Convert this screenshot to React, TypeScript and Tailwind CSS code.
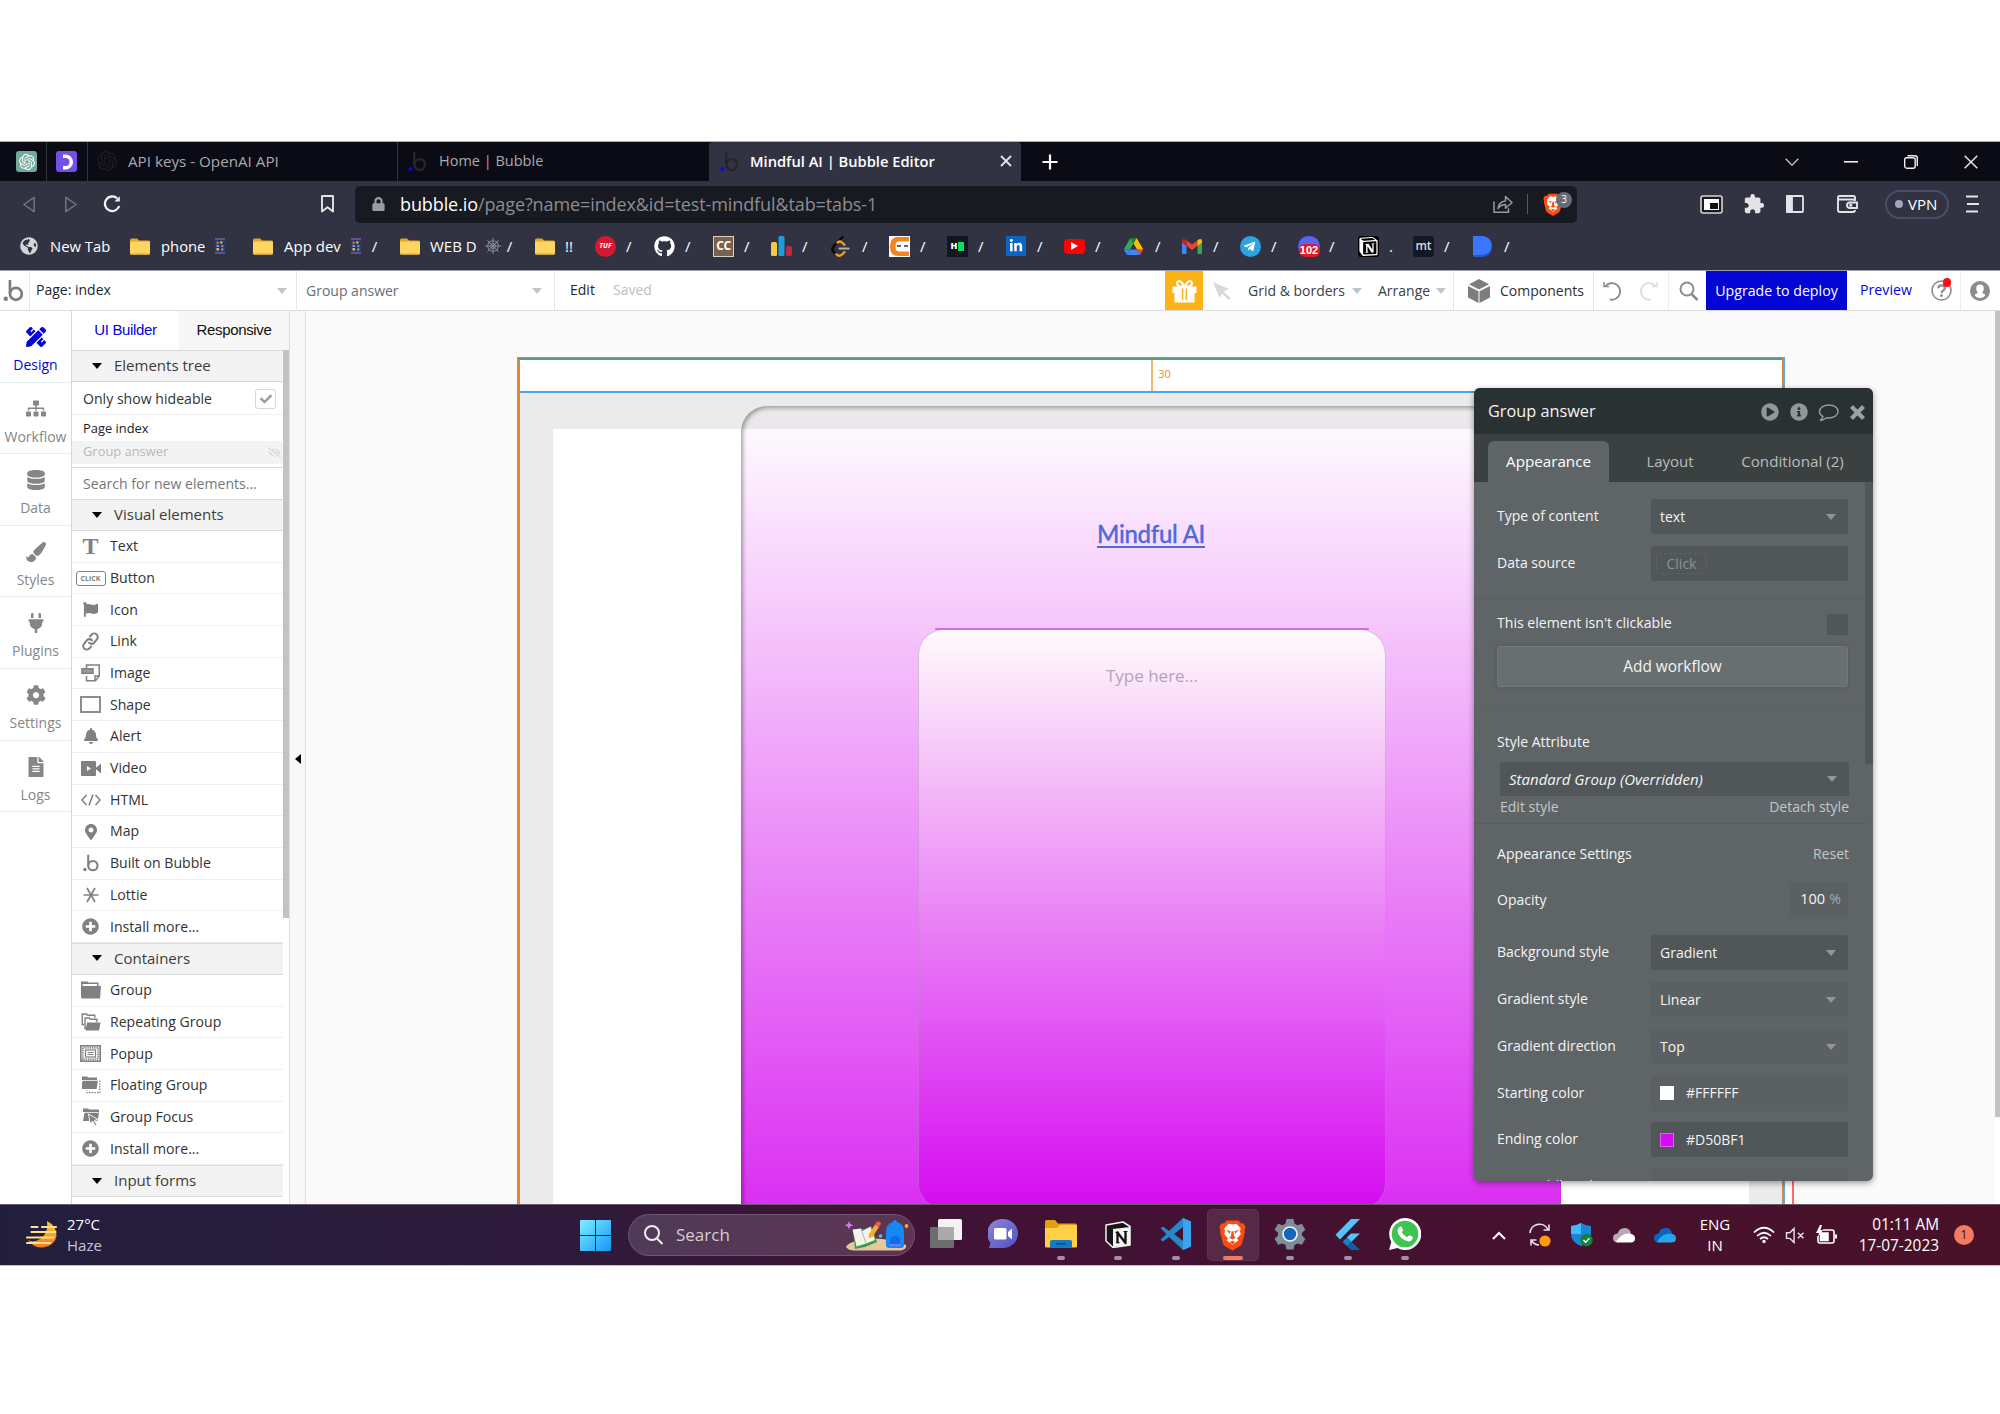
import React from "react";
import {
  FaSitemap, FaDatabase, FaPaintBrush, FaPlug, FaCog, FaFileAlt, FaPencilRuler, FaFlag, FaBell,
  FaMapMarkerAlt, FaPlusCircle, FaPlayCircle, FaInfoCircle,
  FaGithub, FaLock, FaCheck, FaEyeSlash, FaLinkedinIn, FaTelegramPlane, FaGlobeAmericas,
} from "react-icons/fa";
import { MdExtension } from "react-icons/md";
import { SiOpenai, SiNotion } from "react-icons/si";

/* ---------- shared pieces ---------- */

const Caret = ({ className = "" }: { className?: string }) => (
  <svg viewBox="0 0 10 6" className={`h-[6px] w-[10px] shrink-0 ${className}`} fill="currentColor">
    <path d="M0 0h10L5 6z" />
  </svg>
);

const BubbleLogo = ({ className, dot = "currentColor" }: { className: string; dot?: string }) => (
  <svg viewBox="0 0 21 24" className={className} fill="none">
    <circle cx="2.4" cy="20.6" r="2.3" fill={dot} />
    <path d="M6.800 1v14.500" stroke="currentColor" strokeWidth="2.800" />
    <circle cx="13" cy="15.500" r="6.200" stroke="currentColor" strokeWidth="2.800" />
  </svg>
);

const Folder = ({ className }: { className: string }) => (
  <svg viewBox="0 0 20 17" className={className}>
    <path d="M0 2.200Q0 .5 1.500.5H7l2.200 2H18.600Q20 2.500 20 4v2H0z" fill="#e6a526" />
    <rect x="0" y="3.500" width="20" height="13" rx="1.200" fill="#ffd561" />
    <path d="M0 15h20v.6q0 1-1.200 1H1.200q-1.200 0-1.200-1z" fill="#f4bf3d" />
  </svg>
);

const Phone = () => (
  <svg viewBox="0 0 12 16" className="h-4 w-3">
    <path d="M1 0h10v2.500H1zM1 13.500h10V16H1z" fill="#6a4f86" />
    <rect x="1" y="2" width="10" height="12" fill="#233a6b" />
    <path d="M2.500 3.500h2.200v2.500H2.500zM7 7h2.500v2.200H7z" fill="#e35d4f" />
    <path d="M6 3.500h2.500v2H6zM2.500 10h2.500v2.500H2.500z" fill="#f4b942" />
    <path d="M2.500 7h2.500v2H2.500zM7 10.500h2.500v2H7z" fill="#59a7f0" />
  </svg>
);

const Brave = ({ className }: { className: string }) => (
  <svg viewBox="0 0 28 32" className={className}>
    <path d="M8 1h12l3 3.200 2.500-.4L27.500 8l-1 3 .4 2-3 11.500q-.6 2-2.300 3.200L14 32l-7.600-4.300q-1.700-1.200-2.300-3.200L1.100 13l.4-2-1-3 2-4.200 2.500.4z" fill="#ff4a12" />
    <path d="M14 5l4-.6 4.500 4.600-.8 3.500 1 2.500-4.200 4.500 1.800 2L14 26l-6.300-4.500 1.800-2L5.300 15l1-2.500-.8-3.500L10 4.400z" fill="#fff" />
    <path d="M7.500 10.500l4.500 1.700-1 2.500zM20.500 10.500L16 12.200l1 2.500zM13 12h2l.6 5.500 2 1.200L14 20.600l-3.600-1.900 2-1.200zM14 22l3 1.600-3 2-3-2z" fill="#ff4a12" />
  </svg>
);

/* ---------- browser chrome ---------- */

const TabStrip = () => (
  <div className="flex h-[39px] shrink-0 items-center bg-[#0b0b15] text-[15px] text-[#a9a9ae]">
    <div className="flex h-full w-[47px] items-center border-r border-[#34343e] pl-4">
      <span className="flex h-[21px] w-[21px] items-center justify-center rounded-[3px] bg-[#74aa9c]">
        <SiOpenai className="h-4 w-4 text-white" />
      </span>
    </div>
    <div className="flex h-full w-[41px] items-center border-r border-[#34343e] pl-[9px]">
      <span className="flex h-[21px] w-[21px] items-center justify-center rounded-[3px] bg-[#7350e8]">
        <svg viewBox="0 0 14 16" className="h-4 w-[14px]" fill="none" stroke="#fff" strokeWidth="3.500"><path d="M3 2.200h2.500a5.800 5.800 0 010 11.600H3" /></svg>
      </span>
    </div>
    <div className="flex h-full w-[310px] items-center border-r border-[#34343e] pb-px pl-[9px]">
      <SiOpenai className="h-5 w-5 text-[#1c1c21]" />
      <span className="ml-[11px] text-[15.200px]">API keys - OpenAI API</span>
    </div>
    <div className="flex h-full w-[311px] items-center pb-px pl-[9px]">
      <BubbleLogo className="h-[21px] w-[21px] text-[#26262a]" dot="#0505ff" />
      <span className="ml-[11px] text-[14.500px]">Home | Bubble</span>
    </div>
    <div className="flex h-full w-[312px] items-center rounded-t-[4px] bg-[#313342] pb-px pl-[10px] text-white">
      <BubbleLogo className="h-[21px] w-[21px] text-[#262626]" dot="#0505ff" />
      <span className="ml-[10px] w-[250px] text-[14.700px] font-semibold">Mindful AI | Bubble Editor</span>
      <svg viewBox="0 0 12 12" className="h-3 w-3" stroke="#e4e4e8" strokeWidth="1.800"><path d="M1 1l10 10M11 1L1 11" /></svg>
    </div>
    <svg viewBox="0 0 16 16" className="ml-[21px] h-4 w-4" stroke="#fff" strokeWidth="2.200"><path d="M8 .5v15M.5 8h15" /></svg>
    <div className="ml-auto flex items-center pr-[22px] text-white">
      <svg viewBox="0 0 14 8" className="mr-[45px] h-2 w-[14px]" fill="none" stroke="#bbb" strokeWidth="1.400"><path d="M.7.700L7 7.200 13.300.7" /></svg>
      <svg viewBox="0 0 14 2" className="mr-[46px] h-[2px] w-[14px]" fill="#eee"><path d="M0 0h14v1.600H0z" /></svg>
      <svg viewBox="0 0 14 14" className="mr-[46px] h-[14px] w-[14px]" fill="none" stroke="#eee" strokeWidth="1.400"><rect x=".7" y="2.700" width="10.500" height="10.500" rx="2" /><path d="M3.500.8H11q2.300 0 2.300 2.300V11" /></svg>
      <svg viewBox="0 0 14 14" className="h-[14px] w-[14px]" stroke="#eee" strokeWidth="1.400"><path d="M.7.700l12.600 12.600M13.300.700L.7 13.300" /></svg>
    </div>
  </div>
);

const NavRow = () => (
  <div className="flex h-[47px] shrink-0 items-center bg-[#313342] pb-px pl-[22px]">
    <svg viewBox="0 0 14 18" className="mr-[28px] h-[17px] w-[14px]" fill="none" stroke="#73747f" strokeWidth="1.600" strokeLinejoin="round"><path d="M12.500 1.500v15L1.500 9z" /></svg>
    <svg viewBox="0 0 14 18" className="mr-[25px] h-[17px] w-[14px]" fill="none" stroke="#73747f" strokeWidth="1.600" strokeLinejoin="round"><path d="M1.500 1.500v15l11-7.500z" /></svg>
    <svg viewBox="0 0 18 18" className="h-[18px] w-[18px]" fill="none" stroke="#f2f2f2" strokeWidth="2.300"><path d="M14.200 3.400A7.300 7.300 0 1 0 16.200 11" /><path d="M11.500 6.500h5.300V1.200z" fill="#f2f2f2" stroke="none" /></svg>
    <svg viewBox="0 0 13 18" className="ml-[200px] h-[18px] w-[13px]" fill="none" stroke="#e6e6e9" strokeWidth="1.900"><path d="M1 1h11v15.500l-5.500-4.200L1 16.500z" strokeLinejoin="round" /></svg>
    <div className="ml-[21px] flex h-[37px] w-[1222px] items-center rounded-[5px] bg-[#181a21] pl-[17px]">
      <FaLock className="h-[14px] w-[13px] text-[#9a9ba3]" />
      <span className="ml-[15px] w-[1078px] text-[18px] leading-none tracking-[-0.100px] text-[#8b8c93]"><span className="text-white">bubble.io</span>/page?name=index&amp;id=test-mindful&amp;tab=tabs-1</span>
      <svg viewBox="0 0 20 18" className="ml-[15px] h-[18px] w-5 shrink-0" fill="none" stroke="#999aa1" strokeWidth="1.500" strokeLinejoin="round"><path d="M1 6.500v10.700h14.500v-4" /><path d="M5 13.500q1-7 7.500-7.500V1.500l6.500 6-6.500 5.800V9.500Q8 9.500 5 13.500z" /></svg>
      <span className="ml-[14px] h-5 w-px shrink-0 bg-[#555761]" />
      <span className="relative ml-[15px] shrink-0">
        <Brave className="h-[23px] w-5" />
        <span className="absolute -top-px left-[13px] flex h-4 w-4 items-center justify-center rounded-full bg-[#666b77] text-[10px] text-white">3</span>
      </span>
    </div>
    <svg viewBox="0 0 23 19" className="ml-[123px] h-[19px] w-[23px]"><rect x="1" y="1" width="21" height="17" rx="2" fill="#1a1a1a" stroke="#d5d5d8" strokeWidth="1.600" /><rect x="4" y="4" width="15" height="11" fill="#fff" /><rect x="10" y="8" width="8" height="6" fill="#111" /></svg>
    <MdExtension className="ml-5 h-[22px] w-[22px] text-[#e4e4e8]" />
    <svg viewBox="0 0 18 18" className="ml-[21px] h-[18px] w-[18px]" fill="none" stroke="#e4e4e8" strokeWidth="1.800"><rect x="1" y="1" width="16" height="16" rx="1" /><rect x="1" y="1" width="5" height="16" fill="#e4e4e8" /></svg>
    <svg viewBox="0 0 21 18" className="ml-[33px] h-[18px] w-[21px]" fill="none" stroke="#e4e4e8" strokeWidth="1.900"><path d="M18 5V2.500Q18 1 16.500 1H2.500Q1 1 1 2.500v12.500q0 2 2 2h13q2 0 2-2" /><path d="M1 4.500h15q2 0 2 1.500M12.500 7.500H20v5.500h-7.500q-2.500-.3-2.500-2.700t2.500-2.800z" /><circle cx="13.800" cy="10.200" r=".7" fill="#e4e4e8" /></svg>
    <span className="ml-[27px] flex h-[29px] w-[64px] items-center rounded-full border-2 border-[#4b4d62] pl-[8px] text-[15px] text-white"><span className="mr-[5px] h-2 w-2 rounded-full bg-[#a3a4bb]" />VPN</span>
    <svg viewBox="0 0 13 18" className="ml-[17px] h-[18px] w-[13px]" stroke="#e4e4e8" strokeWidth="2"><path d="M0 1.500h12M1 9h12M0 16.500h12" /></svg>
  </div>
);

const favicons: { w: string; icon: React.ReactNode; t?: string }[] = [
  { w: "w-[59px]", icon: <span className="flex h-[21px] w-[21px] items-center justify-center rounded-full bg-[#d3182f] text-[7px] font-bold italic text-white">TUF</span> },
  { w: "w-[59px]", icon: <FaGithub className="h-[21px] w-[21px] text-white" /> },
  { w: "w-[58px]", icon: <span className="flex h-[21px] w-[21px] items-center justify-center border border-[#d9d2c8] bg-[#7b604a] text-[12px] font-bold tracking-[-0.500px] text-white">CC</span> },
  { w: "w-[60px]", icon: <svg viewBox="0 0 21 20" className="h-5 w-[21px]"><rect x="0" y="6" width="6" height="14" rx="1.500" fill="#f6c945" /><rect x="7.500" y="0" width="6" height="20" rx="1.500" fill="#1f9bde" /><rect x="15" y="10" width="6" height="10" rx="1.500" fill="#c12a3a" /></svg> },
  { w: "w-[58px]", icon: <svg viewBox="0 0 19 21" className="h-[21px] w-[19px]" fill="none" strokeLinecap="round" strokeLinejoin="round"><path d="M11.500 1L3 9.800q-3 3-.2 6l2.500 2.500" stroke="#0a0a0a" strokeWidth="2.500" /><path d="M6.500 6.500q2.500-2 4.500 0l2.500 2.300M5.300 18.300q3 3 6 0l2.200-2.200" stroke="#f2a01e" strokeWidth="2.300" /><path d="M8.500 12.500h9" stroke="#b3b3b3" strokeWidth="2.200" /></svg> },
  { w: "w-[58px]", icon: <span className="flex h-[21px] w-[21px] items-center bg-white"><svg viewBox="0 0 21 21" className="h-[21px] w-[21px]"><path d="M20 1H9Q1 1 1 10.500T9 20h11v-4.500H10q-3.500 0-3.500-5t3.500-5h10z" fill="#f18522" /><path d="M8 10h4M15 10h4" stroke="#333" strokeWidth="1.500" /></svg></span> },
  { w: "w-[59px]", icon: <span className="flex h-[21px] w-[21px] items-center justify-center gap-px bg-[#0f1720] text-[9px] font-extrabold text-white">H<i className="h-[9px] w-[6px] bg-[#0ade62]" /></span> },
  { w: "w-[58px]", icon: <span className="flex h-5 w-5 items-center justify-center bg-[#0a66c2]"><FaLinkedinIn className="h-[14px] w-[14px] text-white" /></span> },
  { w: "w-[60px]", icon: <span className="flex h-[15px] w-[21px] items-center justify-center rounded-[4px] bg-[#f00]"><svg viewBox="0 0 7 8" className="h-2 w-[7px]" fill="#fff"><path d="M0 0l7 4-7 4z" /></svg></span> },
  { w: "w-[58px]", icon: <svg viewBox="0 0 87 78" className="h-[17px] w-[19px]"><path d="M6.600 66.900l3.800 6.600c.8 1.400 2 2.500 3.300 3.300L27.500 53H0c0 1.500.4 3.100 1.200 4.500z" fill="#4285f4" /><path d="M43.600 25L29.900 1.200c-1.300.8-2.500 1.900-3.300 3.300L1.200 48.500A9 9 0 000 53h27.500z" fill="#34a853" /><path d="M73.500 76.800c1.300-.8 2.500-1.900 3.300-3.300l9.300-16c.8-1.400 1.200-3 1.200-4.500H59.800l5.900 11.500z" fill="#ea4335" /><path d="M43.600 25L57.400 1.200C56 .4 54.500 0 52.900 0H34.400c-1.600 0-3.200.5-4.500 1.200z" fill="#188038" /><path d="M59.800 53H27.500L13.700 76.800c1.400.8 2.900 1.200 4.500 1.200h50.800c1.600 0 3.200-.5 4.500-1.200z" fill="#4285f4" /><path d="M73.400 26.500L60.700 4.500c-.8-1.400-2-2.500-3.300-3.300L43.600 25l16.200 28h27.400c0-1.500-.4-3.100-1.200-4.500z" fill="#fbbc04" /></svg> },
  { w: "w-[58px]", icon: <svg viewBox="0 0 20 15" className="h-[15px] w-5"><path d="M0 3v11q0 1 1 1h3.500V6z" fill="#4285f4" /><path d="M20 3v11q0 1-1 1h-3.500V6z" fill="#34a853" /><path d="M4.500 1.300v5.500L10 11l5.500-4.200V1.300L10 5.500z" fill="#ea4335" /><path d="M0 2.200v1.500l4.500 3.300V1.300L3.500.5Q0-1 0 2.200z" fill="#c5221f" /><path d="M20 2.200v1.500L15.500 7V1.300l1-.8Q20-1 20 2.200z" fill="#fbbc04" /></svg> },
  { w: "w-[58px]", icon: <span className="flex h-[21px] w-[21px] items-center justify-center rounded-full bg-[#2ba4e0]"><FaTelegramPlane className="mr-0.5 h-[13px] w-[13px] text-white" /></span> },
  { w: "w-[60px]", icon: <span className="flex h-[21px] w-[22px] items-end justify-center rounded-full bg-[#5865f2]"><span className="flex h-[13px] w-[21px] items-center justify-center rounded-[6px] bg-[#e01b24] font-['Liberation_Sans'] text-[11px] font-bold text-white">102</span></span> },
  { w: "w-[55px]", icon: <span className="flex h-[21px] w-[21px] items-center justify-center rounded-[3px] bg-black"><SiNotion className="h-[19px] w-[19px] text-white" /></span>, t: "." },
  { w: "w-[60px]", icon: <span className="flex h-[21px] w-[21px] items-center justify-center rounded-[3px] bg-[#121922] text-[12px] font-semibold text-[#dcd8e8]">mt</span> },
  { w: "w-[60px]", icon: <svg viewBox="0 0 19 21" className="h-[21px] w-[19px]"><path d="M0 1q0-1 1-1h8q10 1 10 10.500T9 21H1q-1 0-1-2z" fill="#2c55c7" /><path d="M0 1q0-1 1-1h8q9.500 1 9.500 9.500T9 19H0z" fill="#3a76ff" /></svg> },
];

const Bookmarks = () => (
  <div className="flex h-[42px] shrink-0 items-center bg-[#313342] pb-[6px] pl-5 text-[15px] text-white">
    <span className="flex w-[110px] items-center"><FaGlobeAmericas className="h-[18px] w-[18px] text-[#d4d4d8]" /><span className="ml-[12px] text-[14.800px]">New Tab</span></span>
    <span className="flex w-[123px] items-center"><Folder className="h-[17px] w-5" /><span className="ml-[11px] mr-[9px] text-[14.800px]">phone</span><Phone /></span>
    <span className="flex w-[147px] items-center"><Folder className="h-[17px] w-5" /><span className="ml-[11px] mr-[9px]">App dev</span><Phone /><span className="ml-[10px]">/</span></span>
    <span className="flex w-[135px] items-center"><Folder className="h-[17px] w-5" /><span className="ml-[10px] mr-[8px]">WEB D</span>
      <svg viewBox="0 0 16 16" className="h-4 w-4" fill="none" stroke="#8a8a94" strokeWidth="1"><path d="M8 0v16M0 8h16M2.300 2.300l11.400 11.400M13.700 2.300L2.300 13.700" /><path d="M8 2.500L12 4l1.500 4-1.500 4-4 1.500L4 12 2.500 8 4 4z" /><circle cx="8" cy="8" r="2.500" /></svg>
      <span className="ml-[6px]">/</span></span>
    <span className="flex w-[60px] items-center"><Folder className="h-[17px] w-5" /><span className="ml-[10px]">!!</span></span>
    {favicons.map((f, i) => (
      <span key={i} className={`flex shrink-0 items-center ${f.w}`}><span className="flex w-[31px]">{f.icon}</span>{f.t ?? "/"}</span>
    ))}
  </div>
);

/* ---------- editor toolbar ---------- */

const Toolbar = () => (
  <div className="flex h-[41px] shrink-0 items-center border-b border-t border-b-[#dcdcdc] border-t-[#a0a1a8] bg-white text-[14px] text-[#3c4044]">
    <div className="flex h-full w-[30px] items-center border-r border-[#e6e6e6] pl-[3px]"><BubbleLogo className="h-[23px] w-[21px] text-[#7d7d7d]" /></div>
    <div className="flex h-full w-[267px] items-center justify-between border-r border-[#e6e6e6] pl-[6px] pr-[9px] text-[#22262a]"><span className="pb-[3px]">Page: index</span><Caret className="text-[#bcc7ce]" /></div>
    <div className="flex h-full w-[258px] items-center justify-between border-r border-[#e6e6e6] pl-[9px] pr-3 text-[#6a6e72]"><span className="pb-px">Group answer</span><Caret className="text-[#bcc7ce]" /></div>
    <span className="ml-[15px] w-[43px] pb-[3px] text-[#22262a]">Edit</span>
    <span className="w-[552px] pb-[3px] text-[#c0c0c0]">Saved</span>
    <span className="flex h-full w-[38px] items-center justify-center bg-[#fcb316]">
      <svg viewBox="0 0 25 24" className="h-6 w-[25px]"><path d="M.5 7.500h24V14H.5zM2.500 13h20v10.500h-20z" fill="#fff" /><path d="M9.800 9.500h1.600V21H9.800zM13.600 9.500h1.600V21h-1.600z" fill="#fcb316" /><path d="M12.500 8Q9 1.500 6.800 2t-1.500 3.500Q6.500 8 12.500 8zM12.500 8Q16 1.500 18.200 2t1.500 3.500Q18.500 8 12.500 8z" fill="none" stroke="#fff" strokeWidth="2.200" /></svg>
    </span>
    <svg viewBox="0 0 18 18" className="ml-2.5 h-[18px] w-[18px] text-[#d9d9d9]" fill="currentColor"><path d="M0 0l16 7-5.500 2.500L17.500 16 15.500 18 9 11.500 6.500 16z" /></svg>
    <span className="ml-[17px] w-[104px]">Grid &amp; borders</span><Caret className="text-[#bcc7ce]" />
    <span className="ml-[16px] w-[58px]">Arrange</span><Caret className="text-[#bcc7ce]" />
    <div className="ml-[7px] flex h-full w-[141px] items-center border-l border-r border-[#dfe9ec] pl-[14px] text-[#2c3034]">
      <svg viewBox="0 0 22 24" className="mr-2.5 h-6 w-[22px] shrink-0" fill="#7d7d7d"><path d="M11 0l10 5.200-10 5.300L1 5.200zM0 7l10.500 5.200V24L0 18.500zM22 7l-10.500 5.200V24L22 18.500z" /></svg>
      <span>Components</span>
    </div>
    <div className="flex h-full w-[75px] items-center border-r border-[#e6eef0] pl-[8px]">
      <svg viewBox="0 0 20 20" className="h-5 w-5 text-[#8c8c8c]" fill="none" stroke="currentColor" strokeWidth="1.900"><path d="M2 1v4.500h5" strokeWidth="1.500" /><path d="M3.500 5A8.300 8.300 0 1 1 8 18.500" /></svg>
      <svg viewBox="0 0 20 20" className="ml-[17px] h-5 w-5 text-[#dedede]" fill="none" stroke="currentColor" strokeWidth="1.900"><path d="M18 1v4.500h-5" strokeWidth="1.500" /><path d="M16.500 5A8.300 8.300 0 1 0 12 18.500" /></svg>
    </div>
    <svg viewBox="0 0 20 20" className="ml-[10px] h-5 w-5" fill="none" stroke="#8c8c8c" strokeWidth="2"><circle cx="8" cy="8" r="6.500" /><path d="M12.500 13l6 6" strokeWidth="2.500" /></svg>
    <span className="ml-[7px] flex h-full w-[141px] items-center justify-center whitespace-nowrap bg-[#0205d3] text-[14.200px] text-white">Upgrade to deploy</span>
    <span className="ml-[13px] w-[71px] pb-0.5 text-[14.200px] text-[#0205d3]">Preview</span>
    <span className="relative h-[21px] w-[21px] shrink-0">
      <svg viewBox="0 0 21 21" className="h-[21px] w-[21px]" fill="none" stroke="#8c8c8c"><circle cx="10.500" cy="10.500" r="9.500" strokeWidth="1.600" /><path d="M7.300 8.300q.2-3 3.300-3t3.200 2.700q0 1.600-1.700 2.500-1.500.8-1.500 2.500" strokeWidth="2.200" /><circle cx="10.500" cy="15.600" r=".8" strokeWidth="1.400" /></svg>
      <i className="absolute -top-[2px] left-3 h-[9px] w-2 rounded-full bg-[#ff0a14]" />
    </span>
    <div className="ml-[8px] flex h-full flex-1 items-center border-l border-[#e6eef0] pl-[9px]">
      <svg viewBox="0 0 20 20" className="h-5 w-5"><circle cx="10" cy="10" r="10" fill="#8c8c8c" /><path d="M10 3.500q3.800 0 3.800 4 0 2.500-1.600 4 .3 1 3.300 2.200-2 3.300-5.500 3.300t-5.500-3.300q3-1.200 3.300-2.200-1.600-1.500-1.600-4 0-4 3.800-4z" fill="#fff" /></svg>
    </div>
  </div>
);

/* ---------- left side ---------- */

const navItems: [string, React.ReactNode][] = [
  ["Design", <FaPencilRuler className="h-5 w-5" />],
  ["Workflow", <FaSitemap className="h-[17px] w-[20px]" />],
  ["Data", <FaDatabase className="h-5 w-5" />],
  ["Styles", <FaPaintBrush className="h-5 w-5" />],
  ["Plugins", <FaPlug className="h-5 w-5" />],
  ["Settings", <FaCog className="h-5 w-5" />],
  ["Logs", <FaFileAlt className="h-5 w-5" />],
];

const NavColumn = () => (
  <div className="flex w-[72px] shrink-0 flex-col border-r border-[#d8d8d8] bg-white">
    {navItems.map(([t, icon], i) => (
      <div key={t} className={`flex h-[71.600px] shrink-0 flex-col items-center border-b border-[#e3eef1] pt-[16px] text-[14px] ${i === 0 ? "text-[#0205d3]" : "text-[#868686]"}`}>
        <span className="flex h-5 items-center">{icon}</span>
        <span className="mt-[6px] leading-[24px]">{t}</span>
      </div>
    ))}
  </div>
);

const SectionHeader = ({ children }: { children: React.ReactNode }) => (
  <div className="flex h-[32px] shrink-0 items-center border-b border-t border-[#dadada] bg-[#f3f3f3] pb-px pl-5 text-[15px] text-[#3c3c3c]"><Caret className="mr-3 text-black" />{children}</div>
);

const FolderGlyph = ({ kind }: { kind: "group" | "repeat" | "float" | "focus" }) => (
  <svg viewBox="0 0 20 18" className="h-[18px] w-5" fill="#808080">
    {kind === "group" && <><path d="M0 .5h6.500L7.500 1.500H17.500V16H0z" /><path d="M1.500 3h14.500v2H1.500z" fill="#fff" /><path d="M2.500 5H20l-1 12.500H.500V7z" /></>}
    {kind === "repeat" && <><path d="M3 11.500H1.200V1h4.300l1 1.200h7.300v2.500" fill="none" stroke="#808080" strokeWidth="1.400" /><path d="M6 15.500H4V5h4.300l1 1.200h6.500V9" fill="none" stroke="#808080" strokeWidth="1.400" /><path d="M6 9.500h13.500L18 17.500H4.500z" /></>}
    {kind === "float" && <><path d="M1 .5h5l1 1h9V4H1z" /><path d="M2.500 4.800H17L15.500 13H1V6z" /><path d="M18.800 4.500v12.200H6v-2.500" fill="none" stroke="#808080" strokeWidth="1.200" strokeDasharray="1.500 1.200" /></>}
    {kind === "focus" && <><path d="M2 .5h5l1 1h10V4H2z" /><path d="M3.500 4.800H18L16.500 13H2z" /><path d="M7.500 6l9.500 5.500-3.600.9 2.400 4.400-1.600.9-2.400-4.400-2.600 2.500z" stroke="#fff" strokeWidth=".9" /></>}
  </svg>
);

const ChainLink = () => (
  <svg viewBox="0 0 24 24" className="h-[19px] w-[19px] -rotate-6" fill="none" stroke="#808080" strokeWidth="2.600" strokeLinecap="round">
    <path d="M10 13.500a4.500 4.500 0 0 0 6.500.5l4-4a4.500 4.500 0 0 0-6.500-6.300L12 5.500" /><path d="M14 10.500a4.500 4.500 0 0 0-6.500-.5l-4 4a4.500 4.500 0 0 0 6.500 6.300l2-1.800" />
  </svg>
);

const visual: [string, React.ReactNode][] = [
  ["Text", <span className="font-['Liberation_Serif'] text-[24px] font-bold leading-none">T</span>],
  ["Button", <span className="flex h-[15px] w-[30px] shrink-0 items-center justify-center rounded-[3px] border border-[#808080] text-[7px] font-bold leading-none">CLICK</span>],
  ["Icon", <FaFlag className="h-[15px] w-[17px]" />],
  ["Link", <ChainLink />],
  ["Image", <svg viewBox="0 0 20 18" className="h-[18px] w-5" fill="none" stroke="#808080" strokeWidth="1.500"><path d="M5.500 4V1h12.700v11l-3.700 4.700h-9V12M18 12h-4v4.500" /><rect x="1" y="4.800" width="11" height="4.500" fill="#999" /></svg>],
  ["Shape", <span className="h-[17px] w-[21px] border-2 border-[#8c8c8c]" />],
  ["Alert", <FaBell className="h-4 w-4" />],
  ["Video", <svg viewBox="0 0 20 15" className="h-[15px] w-5" fill="#808080"><rect x="0" y="0" width="15" height="15" rx="1" /><path d="M14 7.500l6-5v10z" /><path d="M6 5l4 2.500L6 10z" fill="#fff" /></svg>],
  ["HTML", <svg viewBox="0 0 20 12" className="h-3 w-5" fill="none" stroke="#808080" strokeWidth="1.500"><path d="M5.500 1L1 6l4.500 5M14.500 1L19 6l-4.500 5M12 .5L8 11.500" /></svg>],
  ["Map", <FaMapMarkerAlt className="h-4 w-3" />],
  ["Built on Bubble", <BubbleLogo className="h-[18px] w-4" />],
  ["Lottie", <svg viewBox="0 0 16 16" className="h-4 w-4" stroke="#808080" strokeWidth="1.700"><path d="M.5 8h15M4 1l8 14M12 1L4 15" /></svg>],
  ["Install more...", <FaPlusCircle className="h-[17px] w-[17px]" />],
];

const containers: [string, React.ReactNode][] = [
  ["Group", <FolderGlyph kind="group" />],
  ["Repeating Group", <FolderGlyph kind="repeat" />],
  ["Popup", <svg viewBox="0 0 21 17" className="h-[17px] w-[21px]" fill="none" stroke="#808080"><rect x=".8" y=".8" width="19.400" height="15.400" strokeWidth="1.600" /><rect x="2.800" y="2.800" width="15.400" height="11.400" strokeWidth="2" strokeDasharray="1 .8" /><rect x="5.500" y="5" width="10" height="7" strokeWidth="1.200" fill="#fff" /><path d="M7.500 7.500h6M7.500 9.500h6" /></svg>],
  ["Floating Group", <FolderGlyph kind="float" />],
  ["Group Focus", <FolderGlyph kind="focus" />],
  ["Install more...", <FaPlusCircle className="h-[17px] w-[17px]" />],
];

const ElementRow = ({ label, icon }: { label: string; icon: React.ReactNode }) => (
  <div className="flex h-[31.700px] shrink-0 items-center border-b border-[#f0f0f0] text-[14px] text-[#333]">
    <span className="flex w-[38px] items-center justify-center pr-px text-[#808080]">{icon}</span>
    <span className="pb-px text-[14.100px]">{label}</span>
  </div>
);

const Palette = () => (
  <div className="flex w-[217px] shrink-0 flex-col overflow-hidden bg-white">
    <div className="flex h-[39px] shrink-0 font-['Liberation_Sans'] text-[15px] tracking-[-0.350px] text-[#111]">
      <span className="flex w-[107px] items-center justify-center text-[#0205d3]">UI Builder</span>
      <span className="flex flex-1 items-center justify-center bg-[#f7f7f7]">Responsive</span>
    </div>
    <div className="flex min-h-0 flex-1">
      <div className="flex w-[211px] shrink-0 flex-col">
        <SectionHeader>Elements tree</SectionHeader>
        <div className="flex h-[33px] shrink-0 items-center justify-between border-b border-[#efefef] pl-[11px] pr-[7px] pt-px text-[14.100px] text-[#333]">
          Only show hideable
          <span className="flex h-5 w-[21px] items-center justify-center rounded-[3px] border border-[#d6d6d6]"><FaCheck className="h-3 w-3 text-[#9a9a9a]" /></span>
        </div>
        <div className="flex h-[26px] shrink-0 items-center pl-[11px] pt-[2px] text-[12.900px] text-[#222]">Page index</div>
        <div className="flex h-[23px] shrink-0 items-center justify-between bg-[#f3f3f3] pb-px pl-[11px] pr-0.5 text-[12.900px] text-[#b4babd]">Group answer<FaEyeSlash className="h-[13px] w-[13px] text-[#dcdcdc]" /></div>
        <div className="mt-[3px] flex h-[32px] shrink-0 items-center border-t border-[#dadada] pl-[11px] text-[14.100px] text-[#777]">Search for new elements...</div>
        <SectionHeader>Visual elements</SectionHeader>
        {visual.map(([l, i]) => <ElementRow key={l} label={l} icon={i} />)}
        <SectionHeader>Containers</SectionHeader>
        {containers.map(([l, i]) => <ElementRow key={l} label={l} icon={i} />)}
        <SectionHeader>Input forms</SectionHeader>
      </div>
      <div className="h-[568px] w-[6px] bg-[#c3c3c3]" />
    </div>
  </div>
);

/* ---------- canvas ---------- */

const Canvas = () => (
  <div className="relative min-w-0 flex-1 overflow-hidden bg-[#fafafa]">
    <div className="absolute bottom-0 left-[1478px] h-[30px] w-[10px] border-r-2 border-[#ff6b6b] bg-white" />
    <div className="absolute left-[211px] top-[46px] h-[900px] w-[1268px] border border-b-0 border-[#58aed6] border-t-[#4aaec4]">
      <div className="h-full border-2 border-b-0 border-[#d58a3c] border-t-[#5f9a80]">
        <div className="flex h-[33px] justify-center border-b-2 border-[#4aa3ee] bg-white">
          <span className="ml-[20px] border-l-2 border-[#f2b46e] pl-[5px] pt-[6px] text-[11px] font-medium text-[#ee8a2e]">30</span>
        </div>
        <div className="h-[860px] bg-[#ebebeb] px-[33px] pt-[36px]"><div className="h-full bg-white" /></div>
      </div>
    </div>
    <div className="absolute left-[435px] top-[95px] flex h-[850px] w-[820px] flex-col items-center rounded-[26px] bg-[linear-gradient(rgba(213,11,241,0),rgba(213,11,241,0.86)_806px)] shadow-[inset_2px_2px_4px_rgba(0,0,0,0.35)]">
      <div className="mt-[112px] h-[32px] font-['Lato'] text-[24px] font-medium leading-[32px] tracking-[-0.300px] text-[#5069d8] underline decoration-2 underline-offset-[3px] [-webkit-text-stroke:0.3px_#5069d8]">Mindful AI</div>
      <div className="relative left-px mt-[79px] h-[580px] w-[468px] shrink-0 rounded-[26px] border border-[#b58cc4]/50 bg-[linear-gradient(#fffafb,#d50bf1)] pt-[32px] text-center text-[17px] leading-[28px] text-[#b5a3bd]">
        <i className="absolute -top-[2px] left-4 right-4 h-[2px] bg-[#d56de8]" />
        Type here...
      </div>
    </div>
    <div className="absolute bottom-0 right-0 h-[87px] w-[5px] bg-white" />
    <div className="absolute right-0 top-0 h-[806px] w-[5px] bg-[#c3c3c3]" />
    <PropertyPanel />
  </div>
);

const Field = ({ label, children, strong = false, mt }: { label: string; children: React.ReactNode; strong?: boolean; mt: string }) => (
  <div className={`flex h-[35px] shrink-0 items-center ${mt}`}>
    <span className="w-[154px] pb-0.5">{label}</span>
    <span className={`flex h-full w-[197px] items-center rounded-[2px] pl-[9px] ${strong ? "bg-[#515659]" : "bg-[#5b6063]"}`}>{children}</span>
  </div>
);

const Select = ({ children }: { children: React.ReactNode }) => (
  <>{children}<Caret className="ml-auto mr-3 text-[#90969a]" /></>
);

function PropertyPanel() {
  return (
    <div className="absolute left-[1168px] top-[77px] flex h-[793px] w-[399px] flex-col overflow-hidden rounded-[6px] bg-[#5f6467] text-[14px] text-[#f4f4f4] shadow-[0_2px_6px_rgba(0,0,0,0.4)]">
      <div className="flex h-[46px] shrink-0 items-center bg-[#2a3132] pl-[14px] pr-[8px] text-[16.300px]">
        <span className="flex-1">Group answer</span>
        <FaPlayCircle className="mt-px h-[18px] w-[18px] text-[#90989a]" />
        <FaInfoCircle className="ml-[11px] mt-px h-[18px] w-[18px] text-[#90989a]" />
        <svg viewBox="0 0 21 18" className="ml-[10px] mt-1 h-[18px] w-[21px]" fill="none" stroke="#90989a" strokeWidth="1.500"><path d="M11 1c5.500 0 9 3 9 6.500S16 14 10.500 14q-1 0-2-.2Q6 16 2 16.500 5 14.500 4.800 12.500 1.500 10.500 1.500 7.500C1.500 4 5.500 1 11 1z" /></svg>
        <svg viewBox="0 0 15 15" className="ml-[11px] mt-0.5 h-[15px] w-[15px]" stroke="#9aa2a4" strokeWidth="4.200"><path d="M1.500 1.500l12 12M13.500 1.500l-12 12" /></svg>
      </div>
      <div className="flex h-[48px] shrink-0 items-end bg-[#3b4041] pl-[14px] text-[15px] text-[#b9bdbe]">
        <span className="flex h-[41px] w-[121px] items-center justify-center rounded-t-[6px] bg-[#5f6467] text-[15.200px] text-white">Appearance</span>
        <span className="flex h-[41px] w-[122px] items-center justify-center">Layout</span>
        <span className="flex h-[41px] w-[123px] items-center justify-center whitespace-nowrap text-[15.200px]">Conditional (2)</span>
      </div>
      <div className="flex min-h-0 flex-1">
        <div className="flex w-[391px] shrink-0 flex-col">
          <div className="flex h-[117px] shrink-0 flex-col border-b border-[#585d60] pl-[23px]">
            <Field label="Type of content" strong mt="mt-[17px]"><Select>text</Select></Field>
            <Field label="Data source" strong mt="mt-3"><span className="-ml-1 flex h-[21px] w-[51px] items-center justify-center rounded-[3px] border border-dashed border-[#5d6265] text-[#8d9294]">Click</span></Field>
          </div>
          <div className="flex h-[106px] shrink-0 flex-col border-b border-[#5b6063] pl-[23px] pt-[15px]">
            <div className="flex h-[21px] w-[351px] items-center justify-between"><span className="pb-1 text-[14.100px]">This element isn't clickable</span><span className="h-[21px] w-[21px] bg-[#515659]" /></div>
            <div className="mt-[11px] flex h-[41px] w-[351px] items-center justify-center rounded-[3px] border border-[#73787a] bg-[#696e71] pt-px text-[15.400px] shadow-[0_0_4px_rgba(0,0,0,0.15)]">Add workflow</div>
          </div>
          <div className="flex h-[119px] shrink-0 flex-col border-b border-[#585d60] pl-[23px]">
            <span className="mt-[27px] leading-5">Style Attribute</span>
            <div className="ml-[3px] mt-[10px] flex h-[34px] w-[349px] items-center bg-[#515659] pl-[9px] text-[15px] italic"><Select>Standard Group (Overridden)</Select></div>
            <div className="ml-[3px] flex w-[349px] justify-between leading-[21px] text-[#c4c7c8]"><span>Edit style</span><span>Detach style</span></div>
          </div>
          <div className="flex shrink-0 flex-col pl-[23px]">
            <div className="mt-[20px] flex w-[352px] justify-between leading-5"><span className="text-[14.100px]">Appearance Settings</span><span className="text-[#c4c7c8]">Reset</span></div>
            <div className="mt-[18px] flex h-[35px] w-[351px] items-center justify-between">Opacity<span className="flex h-full w-[59px] items-center justify-center gap-1 bg-[#5b6063] pb-0.5 pl-1"><span className="text-[14.500px]">100</span> <span className="text-[#a5a9ab]">%</span></span></div>
            <Field label="Background style" strong mt="mt-[18px]"><Select>Gradient</Select></Field>
            <Field label="Gradient style" mt="mt-3"><Select>Linear</Select></Field>
            <Field label="Gradient direction" mt="mt-3"><Select>Top</Select></Field>
            <Field label="Starting color" mt="mt-[11.500px]"><i className="mr-[12px] h-[14px] w-[14px] bg-white" /><span className="pb-px">#FFFFFF</span></Field>
            <Field label="Ending color" strong mt="mt-[11.500px]"><i className="mr-[12px] h-[14px] w-[14px] border border-[#e05af5] bg-[#d50bf1]" /><span className="pb-px">#D50BF1</span></Field>
            <Field label="Use middle color" mt="mt-3"><i /></Field>
          </div>
        </div>
        <div className="h-[282px] flex-1 bg-[#515659]" />
      </div>
    </div>
  );
}

/* ---------- taskbar ---------- */

const TaskApp = ({ children, state = "none" }: { children: React.ReactNode; state?: "none" | "open" | "active" }) => (
  <span className={`mr-[5.400px] flex h-[52px] w-[52px] shrink-0 flex-col items-center rounded-[5px] ${state === "active" ? "border border-white/5 bg-white/10" : ""}`}>
    <span className="flex h-[50px] shrink-0 items-center justify-center">{children}</span>
    {state === "open" && <i className="-mt-[3px] h-1 w-2 shrink-0 rounded-full bg-[#a58fa6]" />}
    {state === "active" && <i className="-mt-[4px] h-1 w-5 shrink-0 rounded-full bg-[#f4795f]" />}
  </span>
);

const SettingsGear = () => (
  <svg viewBox="0 0 32 32" className="h-8 w-8">
    <path d="M12.500 1h7l1 4.500 3 1.700 4.400-1.400 3.500 6-3.400 3v2.800l3.400 3.200-3.500 6-4.400-1.400-3 1.700-1 4.400h-7l-1-4.400-3-1.700-4.400 1.400-3.500-6L4 17.600v-2.800l-3.400-3 3.500-6 4.400 1.400 3-1.700z" fill="#7f8b96" />
    <circle cx="16" cy="16" r="7.800" fill="#f0f3f6" /><circle cx="16" cy="16" r="6.200" fill="#1667b8" />
  </svg>
);

const Taskbar = () => (
  <div className="flex h-[62px] shrink-0 items-center border-b border-t border-b-[#c9bfc9] border-t-[#6a5a68] bg-[linear-gradient(90deg,#221f3d,#2f1a3b_29%,#3f1236_45%,#451131_70%,#4a1128)] text-[15px] text-white">
    <svg viewBox="0 0 32 30" className="ml-[26px] h-[30px] w-8"><defs><linearGradient id="hz" x1="0" y1="0" x2="0" y2="1"><stop offset="0" stopColor="#ffc53a" /><stop offset="1" stopColor="#f37a21" /></linearGradient></defs><path d="M21 1q10 5 9.500 15A15 13 0 012 20q6 3 12-1 9-6 7-18z" fill="url(#hz)" /><path d="M5.500 7h6M16 7h14M5.500 12h24M1 17.500h26M1 23h23" stroke="#ffe08a" strokeWidth="2.200" strokeLinecap="round" /></svg>
    <span className="ml-[9px] flex w-[513px] flex-col leading-[21px]"><span>27°C</span><span className="text-[#c9c3d0]">Haze</span></span>
    <svg viewBox="0 0 31 31" className="h-[31px] w-[31px]"><defs><linearGradient id="wn" x1="0" y1="0" x2="1" y2="1"><stop offset="0" stopColor="#7df0ff" /><stop offset="1" stopColor="#1496f5" /></linearGradient></defs><path d="M0 1q0-1 1-1h14v15H0zM16 0h14q1 0 1 1v14H16zM0 16h15v15H1q-1 0-1-1zM16 16h15v14q0 1-1 1H16z" fill="url(#wn)" /></svg>
    <div className="ml-[17px] flex h-[42px] w-[287px] items-center rounded-full border border-white/15 bg-white/15 pl-[15px] text-[17px] text-[#d5ccd6]">
      <svg viewBox="0 0 20 20" className="mr-[12px] h-5 w-5" fill="none" stroke="#eee" strokeWidth="2"><circle cx="8" cy="8" r="7" /><path d="M13 13.500l5.500 5.500" /></svg>
      Search
      <svg viewBox="0 0 64 32" className="ml-auto mr-[5px] h-8 w-16">
        <path d="M1 28Q4 22 22 20t39 6q1 4-5 5.500H8Q3 31 1 28z" fill="#e9c79c" />
        <path d="M8 12l10-2 9-2 5 15-12 5-10 2z" fill="#3a9a4a" /><path d="M7.500 10.500l8.500-1 1.500 2.500 8-4.500 4.500 13.500-9 3.500-9.500 3z" fill="#f3f3ee" /><path d="M16.500 11l4.500 13.500" stroke="#a9b4b8" strokeWidth="1" />
        <path d="M24 15l6-9.500 4 2.500-6 9.500-4.500 2z" fill="#f7a928" /><path d="M30 5.500l2-3q4-.5 4 2.500l-2 3z" fill="#ee5a4a" />
        <path d="M41 14q0-9.500 7-11 0-2 2-2t2 2q7 1.500 7 11v12q0 3-3 3H44q-3 0-3-3z" fill="#1787f2" /><path d="M45 21q0-4 5-4t5 4v5H45z" fill="#0b6be8" /><path d="M44.500 26h11" stroke="#a86cf5" strokeWidth="1.600" />
        <path d="M4 2l1.200 3L8.500 6.200 5.200 7.500 4 10.500 2.800 7.500-.5 6.200 2.800 5z" fill="#cf75f5" /><circle cx="35.500" cy="17" r="1.800" fill="#4cc3e6" /><circle cx="61.500" cy="7" r="1.900" fill="#f7a928" />
      </svg>
    </div>
    <span className="w-[5px]" />
    <TaskApp><svg viewBox="0 0 32 30" className="h-[30px] w-8"><rect x="8" y="0" width="24" height="21" rx="1.500" fill="#f2f2f2" /><rect x="0" y="8" width="24" height="21" rx="1.500" fill="#6d6d6d" /><path d="M8 8h16v13H8z" fill="#aaa" /></svg></TaskApp>
    <TaskApp><svg viewBox="0 0 30 30" className="h-[30px] w-[30px]"><defs><linearGradient id="ch" x1="0" y1="0" x2="1" y2="1"><stop offset="0" stopColor="#8f86d8" /><stop offset="1" stopColor="#4f52c4" /></linearGradient></defs><path d="M15 0a15 14.500 0 110 29H1l1.500-5.500A15 14.500 0 0115 0z" fill="url(#ch)" /><rect x="6" y="9" width="12.500" height="11.500" rx="1.500" fill="#fff" /><path d="M20 13l4-3.500v11L20 17z" fill="#fff" /></svg></TaskApp>
    <TaskApp state="open"><svg viewBox="0 0 32 28" className="h-7 w-8"><path d="M0 2q0-2 2-2h8l3 3.500h17q2 0 2 2V12H0z" fill="#e29f15" /><path d="M0 8h12l3-3h17v21q0 1.500-1.500 1.500h-29Q0 27.500 0 26z" fill="#ffcf48" /><path d="M5 28v-6q0-2 2-2h18q2 0 2 2v6z" fill="#1779c4" /><rect x="11" y="23" width="10" height="1.500" fill="#0b4d86" /></svg></TaskApp>
    <TaskApp state="open"><svg viewBox="0 0 26 27" className="h-[27px] w-[26px]" strokeLinejoin="round"><path d="M1 4l17-3 7 4.500V24L8 26.500 1 20z" fill="#161616" stroke="#f4f4f4" strokeWidth="1.500" /><path d="M8 8l17-2v18L8 26z" fill="#f4f4f4" /><path d="M12.500 21.500v-10l8 10.500V10.500" fill="none" stroke="#111" strokeWidth="2.300" /><path d="M10.500 11.300h3.500M18.500 10.500h4M11 21.700h3.500" stroke="#111" strokeWidth="1.200" /></svg></TaskApp>
    <TaskApp state="open"><svg viewBox="0 0 32 32" className="h-8 w-8"><path d="M23 0l8 3.500v25L23 32 9 19l-6 4.500-2.500-1.700L6.500 16 .5 10.200 3 8.500 9 13zM23 9l-9 7 9 7z" fill="#2489ca" fillRule="evenodd" /><path d="M23 0l8 3.500v25L23 32z" fill="#39a5ee" /></svg></TaskApp>
    <TaskApp state="active"><Brave className="h-8 w-[27px]" /></TaskApp>
    <TaskApp state="open"><SettingsGear /></TaskApp>
    <TaskApp state="open"><svg viewBox="0 0 26 31" className="h-[31px] w-[26px]"><path d="M16 0h9L5 20.500.500 15.800z" fill="#54c5f8" /><path d="M16 14.500h9l-8.500 8.300-4.600-4.300z" fill="#54c5f8" /><path d="M7.500 22.800l4.500-4.400 4.500 4.400-4.400 4.500z" fill="#1b7fc4" /><path d="M12.100 27.300l4.400-4.500 8.500 8.200h-9z" fill="#0b5ea8" /></svg></TaskApp>
    <TaskApp state="open"><svg viewBox="0 0 32 32" className="h-8 w-8"><path d="M16 0a16 16 0 11-7.500 30L0 32l2.300-8A16 16 0 0116 0z" fill="#fff" /><circle cx="16" cy="16" r="13.300" fill="#3fc351" /><path d="M11 8.500q1-.5 1.700.5l1.300 3q.2.700-1.300 2.300 2 3.500 5.600 4.900 1.600-2 2.200-1.900l3.100 1.500q.5.500 0 2-1.100 2.700-4 2.700-3.500-.3-7.200-3.500Q8.500 16 8.500 13t2.500-4.500z" fill="#fff" /></svg></TaskApp>
    <div className="ml-auto flex items-center pr-[26px]">
      <svg viewBox="0 0 14 9" className="h-[9px] w-[14px]" fill="none" stroke="#fff" strokeWidth="2"><path d="M1 8l6-6 6 6" /></svg>
      <svg viewBox="0 0 22 24" className="ml-[23px] h-6 w-[22px]" fill="none" stroke="#e6dfe6" strokeWidth="1.600"><path d="M1 10a9.500 9.500 0 0118-3.500M20 1.500v5.500h-5.500M2 22.500V17h5.500M2.500 17.500A9.500 9.500 0 0010 22" /><circle cx="16" cy="18" r="5.600" fill="#ff9a0b" stroke="none" /></svg>
      <svg viewBox="0 0 22 24" className="ml-[20px] h-6 w-[22px]"><path d="M10 0q5 3 10 3v8q0 8-10 12Q0 19 0 11V3q5 0 10-3z" fill="#1a86d9" /><path d="M10 0v11H0V3q5 0 10-3z" fill="#3dbcf5" /><circle cx="15.500" cy="17" r="6.200" fill="#15803a" /><path d="M12.500 17l2.200 2.200 3.800-4" fill="none" stroke="#fff" strokeWidth="1.500" /></svg>
      <Cloud a="#b9a8b5" b="#fff" className="ml-[20px]" />
      <Cloud a="#0a64c0" b="#28a5ec" className="ml-[19px]" />
      <span className="ml-[23px] flex w-8 flex-col items-center leading-[21px]"><span>ENG</span><span>IN</span></span>
      <svg viewBox="0 0 22 18" className="ml-[22px] h-[18px] w-[22px]" fill="none" stroke="#fff" strokeWidth="1.700"><path d="M1 6.500q10-9.500 20 0M4 10q7-6.500 14 0M7 13q4-3.500 8 0" /><circle cx="11" cy="15.500" r="1.700" fill="#fff" stroke="none" /></svg>
      <svg viewBox="0 0 20 18" className="ml-[10px] h-[17px] w-5" fill="none" stroke="#e6dfe6" strokeWidth="1.500"><path d="M1 6h3.500L9 1.500v15L4.500 12H1zM13 6l6 6M19 6l-6 6" /></svg>
      <svg viewBox="0 0 21 20" className="ml-[11px] h-5 w-[21px]" fill="none" stroke="#fff" strokeWidth="1.600"><path d="M7 5h9q2 0 2 2v9q0 2-2 2H4q-2 0-2-2v-5" /><path d="M5 8h7v7.500H4.500v-5z" fill="#fff" /><path d="M20 9.500v4" strokeWidth="2" /><path d="M4 0L0 8h3l-1 4 5-7H4.500L6 0z" fill="#fff" stroke="none" /></svg>
      <span className="ml-[19px] flex w-[83px] flex-col items-end whitespace-nowrap text-[15.400px] leading-[21px]"><span>01:11 AM</span><span>17-07-2023</span></span>
      <span className="ml-[15px] flex h-5 w-5 items-center justify-center rounded-full bg-[#f47b62] text-[12px] text-[#33121a]">1</span>
    </div>
  </div>
);

const Cloud = ({ a, b, className }: { a: string; b: string; className: string }) => (
  <svg viewBox="0 0 22 15" className={`h-[15px] w-[22px] ${className}`}><path d="M4.500 6Q6 0 11.500 0T18 5.500l-8 5z" fill={a} /><path d="M5 14.500q-5 0-5-4.500t5-4.500q3 0 6 2.500l-4 6z" fill={a} /><path d="M3 13.500Q9 5 16 5.500q6 .5 6 4.700 0 4.300-4.500 4.300H5q-1.500 0-2-1z" fill={b} /></svg>
);

export default function App() {
  return (
    <div className="flex h-[1414px] w-[2000px] flex-col overflow-hidden bg-white pt-[141px] font-['Open_Sans','Noto_Sans',sans-serif]">
      <div className="h-px shrink-0 bg-[#a9b0b6]" />
      <TabStrip />
      <NavRow />
      <Bookmarks />
      <Toolbar />
      <div className="flex h-[893px] shrink-0 overflow-hidden">
        <NavColumn />
        <Palette />
        <div className="flex w-[17px] shrink-0 items-center border-l border-r border-[#dedede] bg-[#f8f8f8]"><svg viewBox="0 0 6 10" className="ml-[5px] mt-0.5 h-2.5 w-[6px]"><path d="M6 0v10L0 5z" /></svg></div>
        <Canvas />
      </div>
      <Taskbar />
    </div>
  );
}
